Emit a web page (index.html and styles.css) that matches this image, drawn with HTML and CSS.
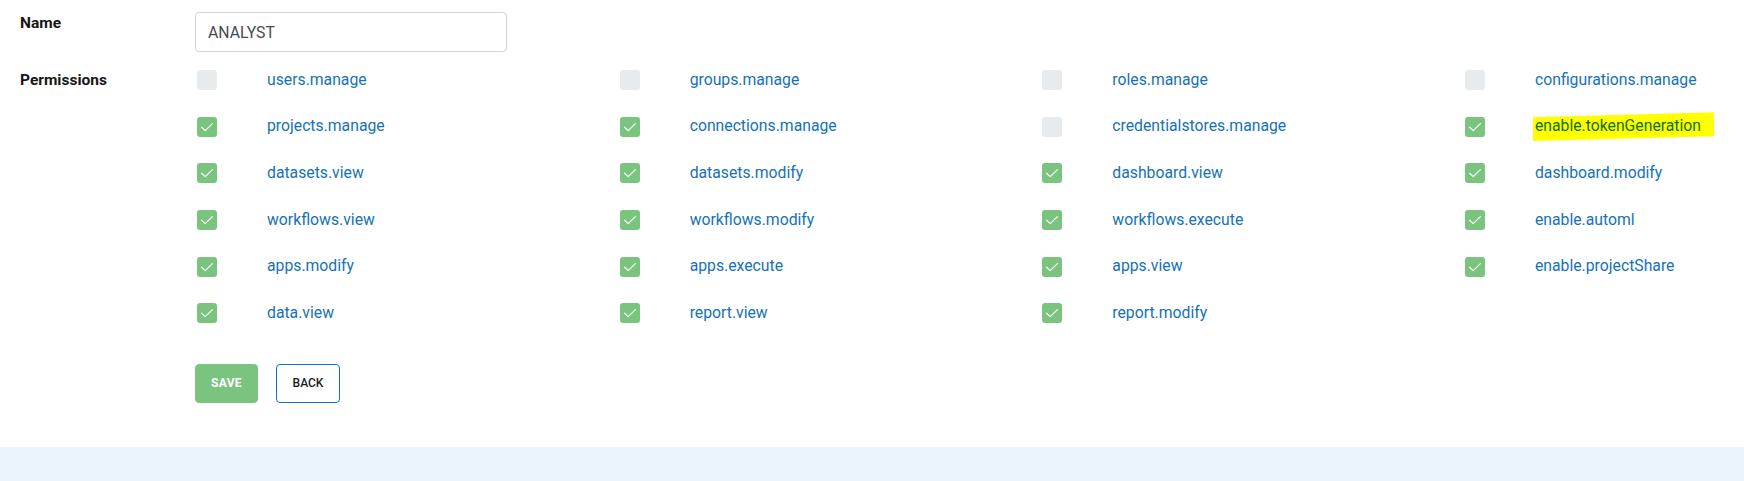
FILE: index.html
```html
<!DOCTYPE html>
<html lang="en">
<head>
<meta charset="utf-8">
<title>Role</title>
<link rel="stylesheet" href="styles.css">
</head>
<body>
<div class="page">
  <form class="form">
    <div class="row name-row">
      <label class="label" for="name">Name</label>
      <input class="input" id="name" type="text" value="ANALYST">
    </div>
    <div class="row perm-row">
      <div class="label">Permissions</div>
      <div class="perm-grid">
        <div class="perm"><span class="box"></span><span class="perm-name">users.manage</span></div>
        <div class="perm"><span class="box"></span><span class="perm-name">groups.manage</span></div>
        <div class="perm"><span class="box"></span><span class="perm-name">roles.manage</span></div>
        <div class="perm"><span class="box"></span><span class="perm-name">configurations.manage</span></div>

        <div class="perm"><span class="box on"><svg viewBox="0 0 20 20"><path d="M4.6 10.2 L8.2 13.6 L15.4 6.6"/></svg></span><span class="perm-name">projects.manage</span></div>
        <div class="perm"><span class="box on"><svg viewBox="0 0 20 20"><path d="M4.6 10.2 L8.2 13.6 L15.4 6.6"/></svg></span><span class="perm-name">connections.manage</span></div>
        <div class="perm"><span class="box"></span><span class="perm-name">credentialstores.manage</span></div>
        <div class="perm"><span class="box on"><svg viewBox="0 0 20 20"><path d="M4.6 10.2 L8.2 13.6 L15.4 6.6"/></svg></span><span class="perm-name highlight">enable.tokenGeneration</span></div>

        <div class="perm"><span class="box on"><svg viewBox="0 0 20 20"><path d="M4.6 10.2 L8.2 13.6 L15.4 6.6"/></svg></span><span class="perm-name">datasets.view</span></div>
        <div class="perm"><span class="box on"><svg viewBox="0 0 20 20"><path d="M4.6 10.2 L8.2 13.6 L15.4 6.6"/></svg></span><span class="perm-name">datasets.modify</span></div>
        <div class="perm"><span class="box on"><svg viewBox="0 0 20 20"><path d="M4.6 10.2 L8.2 13.6 L15.4 6.6"/></svg></span><span class="perm-name">dashboard.view</span></div>
        <div class="perm"><span class="box on"><svg viewBox="0 0 20 20"><path d="M4.6 10.2 L8.2 13.6 L15.4 6.6"/></svg></span><span class="perm-name">dashboard.modify</span></div>

        <div class="perm"><span class="box on"><svg viewBox="0 0 20 20"><path d="M4.6 10.2 L8.2 13.6 L15.4 6.6"/></svg></span><span class="perm-name">workflows.view</span></div>
        <div class="perm"><span class="box on"><svg viewBox="0 0 20 20"><path d="M4.6 10.2 L8.2 13.6 L15.4 6.6"/></svg></span><span class="perm-name">workflows.modify</span></div>
        <div class="perm"><span class="box on"><svg viewBox="0 0 20 20"><path d="M4.6 10.2 L8.2 13.6 L15.4 6.6"/></svg></span><span class="perm-name">workflows.execute</span></div>
        <div class="perm"><span class="box on"><svg viewBox="0 0 20 20"><path d="M4.6 10.2 L8.2 13.6 L15.4 6.6"/></svg></span><span class="perm-name">enable.automl</span></div>

        <div class="perm"><span class="box on"><svg viewBox="0 0 20 20"><path d="M4.6 10.2 L8.2 13.6 L15.4 6.6"/></svg></span><span class="perm-name">apps.modify</span></div>
        <div class="perm"><span class="box on"><svg viewBox="0 0 20 20"><path d="M4.6 10.2 L8.2 13.6 L15.4 6.6"/></svg></span><span class="perm-name">apps.execute</span></div>
        <div class="perm"><span class="box on"><svg viewBox="0 0 20 20"><path d="M4.6 10.2 L8.2 13.6 L15.4 6.6"/></svg></span><span class="perm-name">apps.view</span></div>
        <div class="perm"><span class="box on"><svg viewBox="0 0 20 20"><path d="M4.6 10.2 L8.2 13.6 L15.4 6.6"/></svg></span><span class="perm-name">enable.projectShare</span></div>

        <div class="perm"><span class="box on"><svg viewBox="0 0 20 20"><path d="M4.6 10.2 L8.2 13.6 L15.4 6.6"/></svg></span><span class="perm-name">data.view</span></div>
        <div class="perm"><span class="box on"><svg viewBox="0 0 20 20"><path d="M4.6 10.2 L8.2 13.6 L15.4 6.6"/></svg></span><span class="perm-name">report.view</span></div>
        <div class="perm"><span class="box on"><svg viewBox="0 0 20 20"><path d="M4.6 10.2 L8.2 13.6 L15.4 6.6"/></svg></span><span class="perm-name">report.modify</span></div>
      </div>
    </div>
    <div class="row actions">
      <div class="label"></div>
      <div class="buttons">
        <button type="button" class="btn btn-save">SAVE</button>
        <button type="button" class="btn btn-back">BACK</button>
      </div>
    </div>
  </form>
  <footer class="band"></footer>
</div>
</body>
</html>
```

FILE: styles.css
```css
* {
  box-sizing: border-box;
}

html, body {
  margin: 0;
  padding: 0;
  background: #ffffff;
}

body {
  font-family: Roboto, "Liberation Sans", Arial, sans-serif;
  font-size: 16px;
  color: #212529;
  overflow: hidden;
}

.page {
  width: 1744px;
  height: 481px;
  display: flex;
  flex-direction: column;
}

.form {
  flex: 1;
  padding: 12px 0 0 20px;
  display: flex;
  flex-direction: column;
}

.row {
  display: grid;
  grid-template-columns: 175px 1fr;
  align-items: start;
}

.label {
  font-weight: 700;
  font-size: 15.5px;
  line-height: 20px;
  color: #161616;
}

.name-row .label {
  padding-top: 1px;
}

.input {
  width: 312px;
  height: 40px;
  border: 1px solid #ced4da;
  border-radius: 4px;
  padding: 0 12px;
  font-family: Roboto, "Liberation Sans", Arial, sans-serif;
  font-size: 15.8px;
  color: #454b52;
  background: #fff;
  outline: none;
}

.perm-row {
  margin-top: 18px;
}

.perm-grid {
  display: grid;
  grid-template-columns: repeat(3, 422.67px) auto;
  grid-auto-rows: 20px;
  row-gap: 26.7px;
  padding-left: 2px;
}

.perm {
  display: flex;
  align-items: center;
  gap: 50px;
  height: 20px;
  white-space: nowrap;
}

.box {
  width: 20px;
  height: 20px;
  flex: none;
  border-radius: 3px;
  background: #e8ebee;
  display: flex;
}

.box.on {
  background: #7bc47f;
}

.box svg {
  width: 20px;
  height: 20px;
}

.box svg path {
  fill: none;
  stroke: #ffffff;
  stroke-width: 1.2;
  stroke-linecap: round;
  stroke-linejoin: round;
  opacity: 0.95;
}

.perm-name {
  color: #1572b6;
  font-size: 15.75px;
  line-height: 18.75px;
}

.highlight {
  display: inline-block;
  background: #ffff00;
  color: #127000;
  padding: 5px 13px 5px 2px;
  margin-left: -2px;
  clip-path: polygon(0 5px, 100% 0, 100% 24px, 0 100%);
}

.actions {
  margin-top: 40.5px;
}

.buttons {
  display: flex;
  gap: 18px;
}

.btn {
  height: 39px;
  border-radius: 4px;
  font-family: Roboto, "Liberation Sans", Arial, sans-serif;
  font-size: 12px;
  line-height: 14px;
  padding: 0 15px;
  cursor: pointer;
}

.btn-save {
  width: 63px;
  background: #7bc47f;
  border: 1px solid #7bc47f;
  color: #ffffff;
  font-weight: 700;
  letter-spacing: 0.3px;
}

.btn-back {
  width: 64px;
  background: #ffffff;
  border: 1px solid #1572b6;
  color: #1b1b1b;
  font-weight: 500;
}

.band {
  height: 34px;
  background: #eaf4fd;
}
```
